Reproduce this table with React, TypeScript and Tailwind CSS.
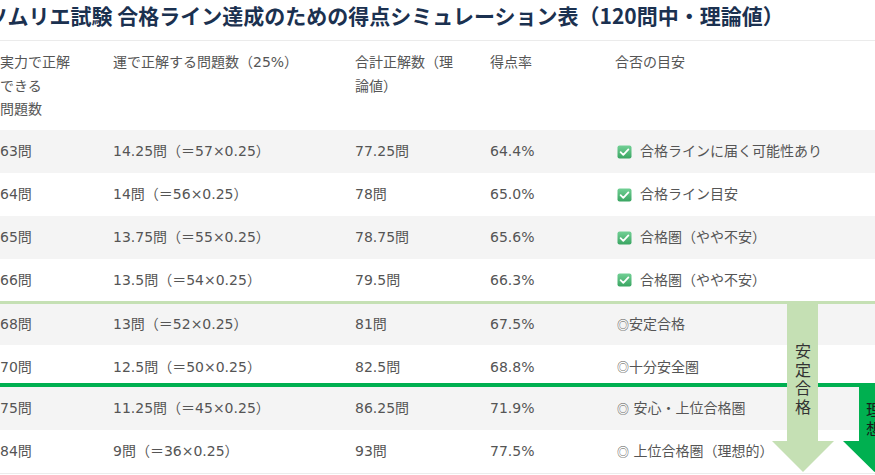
import React from "react";

type Row = {
  a: string;
  b: string;
  c: string;
  d: string;
  mark: "check" | "circle";
  e: string;
  h: string;
  bg: string;
  pt?: string;
};

const rows: Row[] = [
  { a: "63問", b: "14.25問（＝57×0.25）", c: "77.25問", d: "64.4%", mark: "check", e: "合格ラインに届く可能性あり", h: "h-[43px]", bg: "bg-[#f4f4f4]" },
  { a: "64問", b: "14問（＝56×0.25）", c: "78問", d: "65.0%", mark: "check", e: "合格ライン目安", h: "h-[43px]", bg: "bg-white" },
  { a: "65問", b: "13.75問（＝55×0.25）", c: "78.75問", d: "65.6%", mark: "check", e: "合格圏（やや不安）", h: "h-[43px]", bg: "bg-[#f4f4f4]" },
  { a: "66問", b: "13.5問（＝54×0.25）", c: "79.5問", d: "66.3%", mark: "check", e: "合格圏（やや不安）", h: "h-[42px]", bg: "bg-white" },
];

const rows2: Row[] = [
  { a: "68問", b: "13問（＝52×0.25）", c: "81問", d: "67.5%", mark: "circle", e: "安定合格", h: "h-[41px]", bg: "bg-[#f4f4f4]" },
  { a: "70問", b: "12.5問（＝50×0.25）", c: "82.5問", d: "68.8%", mark: "circle", e: "十分安全圏", h: "h-[38px]", bg: "bg-white", pt: "pt-[6px]" },
];

const rows3: Row[] = [
  { a: "75問", b: "11.25問（＝45×0.25）", c: "86.25問", d: "71.9%", mark: "circle", e: " 安心・上位合格圏", h: "h-[43px]", bg: "bg-[#f4f4f4]" },
  { a: "84問", b: "9問（＝36×0.25）", c: "93問", d: "77.5%", mark: "circle", e: " 上位合格圏（理想的）", h: "h-[43px]", bg: "bg-white" },
];

function Check() {
  return (
    <svg width="15" height="14" viewBox="0 0 15 14" className="ml-[2px] mr-[8px] shrink-0">
      <defs>
        <linearGradient id="cg" x1="0" y1="0" x2="0" y2="1">
          <stop offset="0" stopColor="#72d095" />
          <stop offset="1" stopColor="#3aa562" />
        </linearGradient>
      </defs>
      <rect x="0.5" y="0.5" width="14" height="13" rx="2" fill="url(#cg)" />
      <path d="M3.6 7.2 L6.3 9.8 L11.4 4.4" fill="none" stroke="#ffffff" strokeWidth="1.8" strokeLinecap="round" strokeLinejoin="round" />
    </svg>
  );
}

function DataRow({ r }: { r: Row }) {
  return (
    <div className={`grid grid-cols-[113px_242px_135px_125px_1fr] items-center ${r.h} ${r.bg} ${r.pt ?? ""}`}>
      <div className="whitespace-nowrap">{r.a}</div>
      <div className="whitespace-nowrap">{r.b}</div>
      <div className="whitespace-nowrap">{r.c}</div>
      <div className="whitespace-nowrap">{r.d}</div>
      <div className="flex items-center whitespace-pre">
        {r.mark === "check" ? (
          <Check />
        ) : (
          <span className="ml-[2px] text-[12px] [font-family:'Noto_Sans_CJK_JP',sans-serif]">◎</span>
        )}
        <span>{r.e}</span>
      </div>
    </div>
  );
}

export default function App() {
  return (
    <div className="relative w-[875px] h-[475px] overflow-hidden bg-white text-[#555555] text-[14px] [font-family:'DejaVu_Sans','Noto_Sans_CJK_JP',sans-serif]">
      <div className="h-[40px] leading-[30px] ml-[-13px] whitespace-nowrap text-[21px] font-bold text-[#1b3150] [font-family:'Noto_Sans_CJK_JP',sans-serif]">
        ソムリエ試験 合格ライン達成のための得点シミュレーション表（120問中・理論値）
      </div>
      <div className="border-t border-[#ebebeb]">
        <div className="grid grid-cols-[113px_242px_135px_125px_1fr] h-[89px] pt-[10px] leading-[23.5px] items-start">
          <div>
            実力で正解<br />できる<br />問題数
          </div>
          <div className="whitespace-nowrap">運で正解する問題数（25%）</div>
          <div>
            合計正解数（理<br />論値）
          </div>
          <div>得点率</div>
          <div>合否の目安</div>
        </div>
        {rows.map((r, i) => (
          <DataRow key={"a" + i} r={r} />
        ))}
        <div className="h-[3px] bg-[#c5e0b4]" />
        {rows2.map((r, i) => (
          <DataRow key={"b" + i} r={r} />
        ))}
        <div className="h-[4px] bg-[#00b050]" />
        {rows3.map((r, i) => (
          <DataRow key={"c" + i} r={r} />
        ))}
        <div className="border-t border-[#ececec]" />
      </div>

      <svg className="absolute left-0 top-0 pointer-events-none" width="875" height="475" viewBox="0 0 875 475">
        <polygon points="787,301 818,301 818,441 834,441 803,472 772,441 787,441" fill="#c5e0b4" />
        <polygon points="859,387 890,387 890,441 906,441 874.5,472 843,441 859,441" fill="#00b050" />
      </svg>
      <div className="absolute left-[795px] top-[343px] h-[80px] text-[16px] leading-[16px] tracking-[2.5px] text-[#333333] [writing-mode:vertical-rl] [font-family:'Noto_Sans_CJK_JP',sans-serif]">
        安定合格
      </div>
      <div className="absolute left-[866px] top-[402px] h-[40px] text-[16px] leading-[16px] tracking-[3px] text-[#1a1a1a] [writing-mode:vertical-rl] [font-family:'Noto_Sans_CJK_JP',sans-serif]">
        理想
      </div>
    </div>
  );
}
